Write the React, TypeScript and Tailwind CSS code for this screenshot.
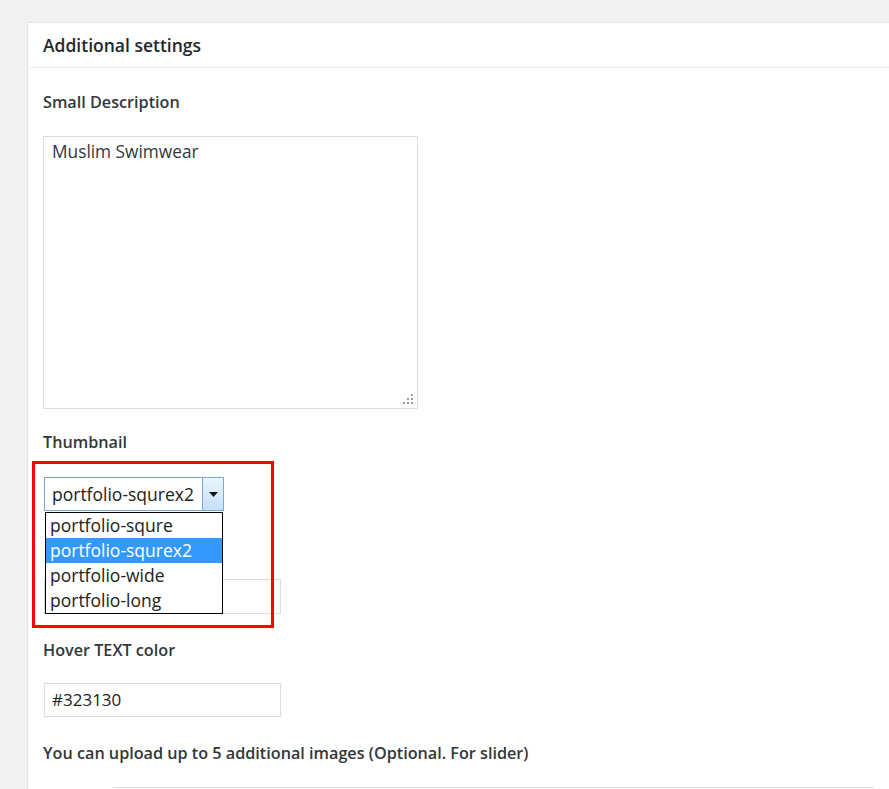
import React from 'react';

const options = ['portfolio-squre', 'portfolio-squrex2', 'portfolio-wide', 'portfolio-long'];

const Label: React.FC<{ children: React.ReactNode; className?: string }> = ({ children, className = '' }) => (
  <div className={`h-[20px] leading-[20px] text-[16.2px] font-semibold text-[#32373c] ${className}`}>{children}</div>
);

const ResizeGrip = () => (
  <svg className="absolute right-[3px] bottom-[3px]" width="12" height="12" viewBox="0 0 12 12">
    {[
      [9, 1],
      [5, 5],
      [9, 5],
      [1, 9],
      [5, 9],
      [9, 9],
    ].map(([x, y], i) => (
      <rect key={i} x={x} y={y} width="2" height="2" fill="#9a9a9a" />
    ))}
  </svg>
);

export default function App() {
  return (
    <div className="min-h-screen bg-[#f1f1f1] pt-[22px] pl-[27px] overflow-hidden font-['Open_Sans','Liberation_Sans',sans-serif]">
      <div className="bg-white border-l border-t border-[#e5e5e5] min-h-[767px]">
        {/* Header */}
        <div className="h-[45px] border-b border-[#eeeeee] px-[15px] flex items-center text-[17.5px] font-semibold text-[#23282d]">
          Additional settings
        </div>

        <div className="px-[15px] pt-[24px]">
          <Label>Small Description</Label>
          <div className="relative mt-[24px] w-[375px] h-[273px] border border-[#dddddd] px-[8px] pt-[4px] text-[17.3px] leading-[22px] text-[#32373c]">
            Muslim Swimwear
            <ResizeGrip />
          </div>

          <Label className="mt-[23px]">Thumbnail</Label>

          {/* Select with open list */}
          <div className="relative mt-[25px] ml-px w-[180px] h-[34px]">
            <div className="flex h-full border border-[#7aa7d6] bg-white">
              <div className="flex-1 pl-[7px] text-[17.5px] leading-[32px] text-[#222]">portfolio-squrex2</div>
              <div className="w-[21px] border-l border-[#7aa7d6] bg-gradient-to-b from-[#eaf4fd] to-[#c4e0f8] flex items-center justify-center">
                <svg width="9" height="5" viewBox="0 0 9 5">
                  <path d="M0 0 L9 0 L4.5 5 Z" fill="#111" />
                </svg>
              </div>
            </div>

            {/* Annotation box */}
            <div className="absolute left-[-12px] top-[-16px] w-[242px] h-[167px] border-[3px] border-[#ff0000] z-20 pointer-events-none" />

            {/* Open dropdown list */}
            <div className="absolute left-px top-[35px] w-[178px] border border-black bg-white z-10">
              {options.map((o, i) => (
                <div
                  key={o}
                  className={`h-[25px] pl-[4px] text-[17.5px] leading-[25px] ${
                    i === 1 ? 'bg-[#3399ff] text-white' : 'text-[#222]'
                  }`}
                >
                  {o}
                </div>
              ))}
            </div>
          </div>

          {/* Hidden label beneath the list */}
          <div className="mt-[25px] h-[20px]" />
          <div className="mt-[23px] ml-px w-[237px] h-[35px] border border-[#dddddd]" />

          <Label className="mt-[26px]">Hover TEXT color</Label>
          <div className="mt-[23px] ml-px w-[237px] h-[34px] border border-[#dddddd] pl-[7px] text-[17px] leading-[32px] text-[#222]">
            #323130
          </div>

          <Label className="mt-[26px]">You can upload up to 5 additional images (Optional. For slider)</Label>
          <div className="mt-[24px] ml-[70px] border-t border-[#dddddd] h-[10px]" />
        </div>
      </div>
    </div>
  );
}
